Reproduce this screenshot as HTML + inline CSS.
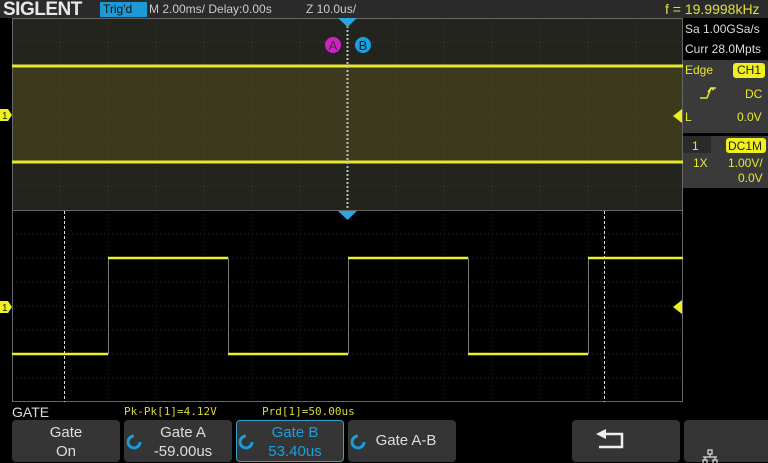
<!DOCTYPE html>
<html><head><style>
body{margin:0;width:768px;height:463px;background:#000;overflow:hidden;font-family:"Liberation Sans",sans-serif;position:relative}
.a{position:absolute;white-space:nowrap}
.btn{position:absolute;top:420px;height:42px;background:#353535;border-radius:4px;color:#ddd;font-size:15px;text-align:center;line-height:19px}
</style></head><body>
<svg class="a" style="left:0;top:0" width="768" height="463">
<rect x="0" y="0" width="768" height="18" fill="#2b2b2b"/>
<rect x="12" y="18" width="671" height="192" fill="#24241f"/>
<rect x="12" y="66" width="671" height="96" fill="#3b3a1c"/>
<rect x="12" y="210" width="671" height="192" fill="#000"/>
<g stroke="#555" stroke-width="1" stroke-dasharray="1 3" opacity="0.5">
<path d="M60 18V402M108 18V402M156 18V402M204 18V402M252 18V402M300 18V402M396 18V402M444 18V402M492 18V402M540 18V402M588 18V402M636 18V402"/>
<path d="M12 42H683M12 90H683M12 114H683M12 138H683M12 186H683M12 234H683M12 258H683M12 282H683M12 306H683M12 330H683M12 354H683M12 378H683"/>
</g>
<rect x="12.5" y="18.5" width="670" height="383" fill="none" stroke="#666"/>
<line x1="12" y1="210.5" x2="683" y2="210.5" stroke="#666"/>
<line x1="12" y1="66" x2="683" y2="66" stroke="#e8e830" stroke-width="3"/>
<line x1="12" y1="162" x2="683" y2="162" stroke="#e8e830" stroke-width="3"/>
<line x1="347.5" y1="26" x2="347.5" y2="210" stroke="#bbb" stroke-width="2" stroke-dasharray="2 2"/>
<g stroke="#ddd" stroke-width="1" stroke-dasharray="3 2"><line x1="64.5" y1="211" x2="64.5" y2="402"/><line x1="604.5" y1="211" x2="604.5" y2="402"/></g>
<path d="M108.5 258V354M228.5 258V354M348.5 258V354M468.5 258V354M588.5 258V354" stroke="#777" stroke-width="1"/>
<path d="M12 354H108M108 258H228M228 354H348M348 258H468M468 354H588M588 258H683" fill="none" stroke="#f0f020" stroke-width="2.5"/>
<path d="M338 18H357L347.5 27Z" fill="#29a8e0"/>
<path d="M338 211H357L347.5 220Z" fill="#29a8e0"/>
<circle cx="333" cy="45" r="8" fill="#d020c8"/><text x="333" y="50" fill="#333" font-size="13" text-anchor="middle" font-family="Liberation Sans">A</text>
<circle cx="363" cy="45" r="8" fill="#1aa0e0"/><text x="363" y="50" fill="#123" font-size="13" text-anchor="middle" font-family="Liberation Sans">B</text>
<path d="M0 109H8L12 115L8 121H0Z" fill="#f0f020"/><text x="2" y="119" font-size="10" fill="#222">1</text>
<path d="M0 301H8L12 307L8 313H0Z" fill="#f0f020"/><text x="2" y="311" font-size="10" fill="#222">1</text>
<path d="M682 109V123L673 116Z" fill="#f0f020"/>
<path d="M682 300V314L673 307Z" fill="#f0f020"/>
<rect x="683" y="18" width="85" height="42" fill="#000"/>
<rect x="683" y="60" width="85" height="73" fill="#3a3a3a"/>
<rect x="683" y="136" width="85" height="52" fill="#3a3a3a"/>
<rect x="683" y="136" width="28" height="17" fill="#2a2a2a"/>
<rect x="733" y="63" width="32" height="15" rx="3" fill="#f0f020"/>
<rect x="726" y="138" width="40" height="15" rx="3" fill="#f0f020"/>
<path d="M700 98H707L711 88H716M708 92L711 88L714 90" stroke="#e8e830" fill="none" stroke-width="1.5"/>
</svg>
<div class="a" style="left:3px;top:-1px;color:#e8e8e8;font-weight:bold;font-size:19px;letter-spacing:-0.5px">SIGLENT</div>
<div class="a" style="left:100px;top:2px;width:44px;height:15px;background:#1b9ad6;color:#111;font-size:12px;line-height:14px;padding-left:3px">Trig'd</div>
<div class="a" style="left:149px;top:2px;color:#ccc;font-size:12px">M 2.00ms/ Delay:0.00s</div>
<div class="a" style="left:306px;top:2px;color:#ccc;font-size:12px">Z 10.0us/</div>
<div class="a" style="left:665px;top:1px;color:#e0e040;font-size:14px">f = 19.9998kHz</div>
<div class="a" style="left:685px;top:22px;color:#ddd;font-size:12px">Sa 1.00GSa/s</div>
<div class="a" style="left:685px;top:42px;color:#ddd;font-size:12px">Curr 28.0Mpts</div>
<div class="a" style="left:685px;top:63px;color:#e8e830;font-size:12px">Edge</div>
<div class="a" style="left:737px;top:63px;color:#222;font-size:12px">CH1</div>
<div class="a" style="left:745px;top:87px;color:#e8e830;font-size:12px">DC</div>
<div class="a" style="left:685px;top:110px;color:#e8e830;font-size:12px">L</div>
<div class="a" style="left:737px;top:110px;color:#e8e830;font-size:12px">0.0V</div>
<div class="a" style="left:692px;top:139px;color:#e8e830;font-size:12px">1</div>
<div class="a" style="left:728px;top:139px;color:#222;font-size:12px">DC1M</div>
<div class="a" style="left:693px;top:156px;color:#e8e830;font-size:12px">1X</div>
<div class="a" style="left:728px;top:156px;color:#e8e830;font-size:12px">1.00V/</div>
<div class="a" style="left:738px;top:171px;color:#e8e830;font-size:12px">0.0V</div>
<div class="a" style="left:12px;top:404px;color:#ddd;font-size:14px">GATE</div>
<div class="a" style="left:124px;top:405px;color:#d8d840;font-size:11px;font-family:'DejaVu Sans Mono',monospace">Pk-Pk[1]=4.12V</div>
<div class="a" style="left:262px;top:405px;color:#d8d840;font-size:11px;font-family:'DejaVu Sans Mono',monospace">Prd[1]=50.00us</div>
<div class="btn" style="left:12px;width:108px;padding-top:3px;height:39px">Gate<br>On</div>
<div class="btn" style="left:124px;padding-top:3px;height:39px;padding-left:10px;width:98px">Gate A<br>-59.00us</div>
<div class="btn" style="left:236px;padding-top:2px;height:38px;border:1px solid #3aa0d0;color:#1aa0e0;padding-left:10px;width:96px">Gate B<br>53.40us</div>
<div class="btn" style="left:348px;width:108px;line-height:42px;padding-left:8px;box-sizing:border-box">Gate A-B</div>
<svg class="a" style="left:126px;top:434px" width="16" height="16"><circle cx="8" cy="8" r="6" fill="none" stroke="#1a9ad6" stroke-width="3" stroke-dasharray="28 10"/></svg>
<svg class="a" style="left:238px;top:434px" width="16" height="16"><circle cx="8" cy="8" r="6" fill="none" stroke="#1a9ad6" stroke-width="3" stroke-dasharray="28 10"/></svg>
<svg class="a" style="left:350px;top:434px" width="16" height="16"><circle cx="8" cy="8" r="6" fill="none" stroke="#1a9ad6" stroke-width="3" stroke-dasharray="28 10"/></svg>
<div class="btn" style="left:572px;width:108px"></div>
<div class="btn" style="left:684px;width:84px;border-radius:4px 0 0 4px"></div>
<svg class="a" style="left:572px;top:420px" width="196" height="43">
<path d="M32 14H50V27H27" fill="none" stroke="#eee" stroke-width="2.5"/>
<path d="M24 14L34 9V19Z" fill="#eee"/>
<g fill="none" stroke="#ddd" stroke-width="1.2"><rect x="136" y="30" width="4" height="4"/><path d="M138 34V37M131 37H145M133 37V40M143 37V40"/><rect x="131" y="40" width="4" height="4"/><rect x="141" y="40" width="4" height="4"/></g>
</svg>
</body></html>
